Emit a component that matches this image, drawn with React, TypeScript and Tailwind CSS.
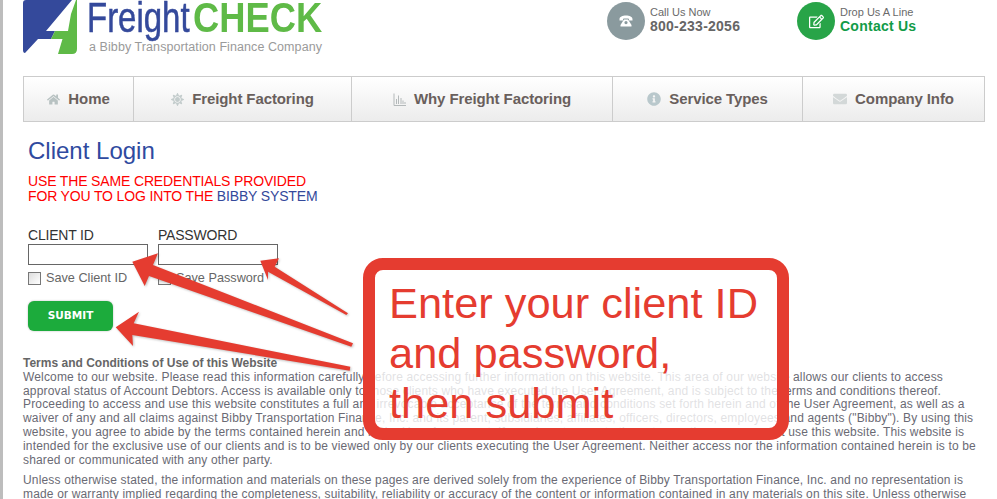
import { FaHome, FaSun, FaInfoCircle, FaEnvelope, FaRegEdit } from "react-icons/fa";
import type { ReactNode } from "react";

function BarsIcon() {
  return (
    <svg width="13" height="13" viewBox="0 0 13 13" fill="none" stroke="#b4b9ba" strokeWidth="1">
      <path d="M1 0.5V12.5H13" />
      <path d="M3.5 11V6M5.5 11V2.5M8 11V5M10 11V7.5M12 11V9" />
    </svg>
  );
}

function PhoneIcon() {
  return (
    <svg width="14" height="12" viewBox="0 0 14 12" fill="#fff">
      <path d="M0.5 4.2C0.5 1.8 3.5 0.5 7 0.5s6.500 1.300 6.500 3.700V5.500H10V3.800C9 3.400 5 3.400 4 3.800V5.500H0.500Z" />
      <path d="M4 6L5 4.500H9L10 6L12.500 10V11.500H1.500V10ZM7 6A1.600 1.600 0 1 0 7 9.200A1.600 1.600 0 1 0 7 6Z" fillRule="evenodd" />
    </svg>
  );
}

function Logo() {
  return (
    <svg width="55" height="54" viewBox="23 0 55 54" className="shrink-0">
      <path d="M72 0H26Q23 0 23 3V50Q23 53 25 53L38 39H51L55 31H46Z" fill="#34499b" />
      <path d="M77 0V49Q77 54 72 54H58L62.500 39H51L55 31H68L71 14L76 0Z" fill="#5fba47" />
    </svg>
  );
}

function NavItem({ icon, label }: { icon: ReactNode; label: string }) {
  return (
    <div className="flex items-center justify-center gap-[8px] border-r border-[#cccccc] last:border-r-0 text-[15px] font-bold tracking-[-0.1px] text-[#695f5c]">
      {icon}
      <span>{label}</span>
    </div>
  );
}

function Arrows() {
  return (
    <svg className="absolute left-0 top-0 pointer-events-none drop-shadow-[1px_1px_1px_rgba(0,0,0,0.25)]" width="997" height="499" viewBox="0 0 997 499">
      <g fill="#e53c30">
        <polygon points="129.300,261.700 155,253.300 150,265 350,343.300 348.300,346.700 146,276 141.700,286" />
        <polygon points="257.300,260.700 276,258.300 271.700,266.700 345,313.300 343.300,315 265,271.700 265,280" />
        <polygon points="112.700,327.300 136,311.700 130.700,323.300 347.300,366.700 346.700,370.700 129.300,335 130,346" />
      </g>
    </svg>
  );
}

export default function App() {
  return (
    <div className="relative h-[499px] w-[997px] overflow-hidden border-l-[3px] border-[#bdbdbd] bg-white font-['Liberation_Sans',Arial,sans-serif]">
      <header className="flex h-[76px] pl-5">
        <div className="flex items-start gap-[9px]">
          <Logo />
          <div className="flex w-[240px] flex-col">
            <div className="flex h-[40px] items-start pt-px leading-[34px]">
              <span className="block w-[106px] origin-top-left scale-x-[0.785] whitespace-nowrap text-[42px] text-[#34499b] [-webkit-text-stroke:0.5px_#34499b]">Freight</span>
              <span className="block w-[130px] origin-top-left scale-x-[0.865] whitespace-nowrap text-[42px] font-bold text-[#5fba47]">CHECK</span>
            </div>
            <span className="whitespace-nowrap pl-[2px] text-[12.500px] leading-[15px] tracking-[0.08px] text-[#9a9a9a]">a Bibby Transportation Finance Company</span>
          </div>
        </div>
        <div className="ml-[280px] mt-[2px] flex items-start">
          <div className="flex h-[38px] w-[38px] items-center justify-center rounded-full bg-[#8a9a9e]">
            <PhoneIcon />
          </div>
          <div className="ml-[5px] mt-[3px] w-[147px]">
            <div className="text-[11px] leading-[14px] text-[#6a6a6a]">Call Us Now</div>
            <div className="text-[14px] font-bold leading-[14px] tracking-[0.25px] text-[#666666]">800-233-2056</div>
          </div>
          <div className="flex h-[38px] w-[38px] items-center justify-center rounded-full bg-[#28a448]">
            <FaRegEdit size={15} color="#ffffff" />
          </div>
          <div className="ml-[5px] mt-[3px]">
            <div className="text-[11px] leading-[14px] text-[#6a6a6a]">Drop Us A Line</div>
            <div className="text-[14px] font-bold leading-[14px] tracking-[0.25px] text-[#129b48]">Contact Us</div>
          </div>
        </div>
      </header>

      <nav className="ml-5 grid h-[46px] w-[962px] grid-cols-[110px_218px_261px_190px_1fr] border border-[#cccccc] bg-gradient-to-b from-white to-[#ececec]">
        <NavItem icon={<FaHome size={13} color="#b8c2c2" />} label="Home" />
        <NavItem icon={<FaSun size={13} color="#c3cccc" />} label="Freight Factoring" />
        <NavItem icon={<BarsIcon />} label="Why Freight Factoring" />
        <NavItem icon={<FaInfoCircle size={14} color="#b9c8cc" />} label="Service Types" />
        <NavItem icon={<FaEnvelope size={14} color="#d3d8d8" />} label="Company Info" />
      </nav>

      <main className="pl-5 pt-[15px]">
        <div className="pl-[5px]">
          <h1 className="text-[24px] leading-[27px] text-[#2f4a9f]">Client Login</h1>
          <p className="mt-[10px] text-[14px] leading-[15px] tracking-[-0.15px] text-[#ff0000]">
            USE THE SAME CREDENTIALS PROVIDED
            <br />
            FOR YOU TO LOG INTO THE <span className="text-[#34499b]">BIBBY SYSTEM</span>
          </p>
          <div className="mt-[23px] flex gap-[10px]">
            <div className="w-[120px]">
              <label className="block text-[14px] leading-[17px] tracking-[-0.2px] text-[#333333]">CLIENT ID</label>
              <input className="block h-[21px] w-[120px] border border-[#666666] bg-white" />
              <div className="mt-[6px] flex items-center gap-[5px] whitespace-nowrap text-[12.700px] leading-[15px] text-[#666666]">
                <span className="h-[13px] w-[13px] border border-[#777777] bg-gradient-to-br from-[#dddddd] to-white" />
                Save Client ID
              </div>
            </div>
            <div className="w-[120px]">
              <label className="block text-[14px] leading-[17px] tracking-[-0.2px] text-[#333333]">PASSWORD</label>
              <input className="block h-[21px] w-[120px] border border-[#666666] bg-white" />
              <div className="mt-[6px] flex items-center gap-[5px] whitespace-nowrap text-[12.700px] leading-[15px] text-[#666666]">
                <span className="h-[13px] w-[13px] border border-[#777777] bg-gradient-to-br from-[#dddddd] to-white" />
                Save Password
              </div>
            </div>
          </div>
          <button className="mt-[15px] block h-[30px] w-[85px] rounded-[6px] bg-[#1cab3c] font-['DejaVu_Sans',sans-serif] text-[10.500px] font-bold text-white shadow-[0_0_2px_rgba(0,0,0,0.3)]">
            SUBMIT
          </button>
        </div>
        <div className="mt-[26px] whitespace-nowrap text-[12px] leading-[13.8px] tracking-[0.165px] text-[#6a6a74]">
          <p>
            <strong className="font-bold tracking-normal text-[#666666]">Terms and Conditions of Use of this Website</strong>
            <br />
            Welcome to our website. Please read this information carefully before accessing further information on this website. This area of our website allows our clients to access
            <br />
            approval status of Account Debtors. Access is available only to those clients who have executed the User Agreement, and is subject to the terms and conditions thereof.
            <br />
            Proceeding to access and use this website constitutes a full and irrevocable acceptance of the terms and conditions set forth herein and of the User Agreement, as well as a
            <br />
            waiver of any and all claims against Bibby Transportation Finance, Inc. and its parent, subsidiaries, affiliates, officers, directors, employees and agents ("Bibby"). By using this
            <br />
            website, you agree to abide by the terms contained herein and in the User Agreement. If you do not agree to these terms, then you may not use this website. This website is
            <br />
            intended for the exclusive use of our clients and is to be viewed only by our clients executing the User Agreement. Neither access nor the information contained herein is to be
            <br />
            shared or communicated with any other party.
          </p>
          <p className="mt-[7px]">
            Unless otherwise stated, the information and materials on these pages are derived solely from the experience of Bibby Transportation Finance, Inc. and no representation is
            <br />
            made or warranty implied regarding the completeness, suitability, reliability or accuracy of the content or information contained in any materials on this site. Unless otherwise
          </p>
        </div>
      </main>

      <Arrows />

      <div className="absolute left-[360px] top-[258px] h-[182px] w-[426px] rounded-[20px] border-[12px] border-[#e53c30] bg-white/80 pl-[14px] pt-[8px] text-[43.400px] leading-[50px] text-[#e53c30] whitespace-nowrap">
        Enter your client ID
        <br />
        and password,
        <br />
        then submit
      </div>
    </div>
  );
}
